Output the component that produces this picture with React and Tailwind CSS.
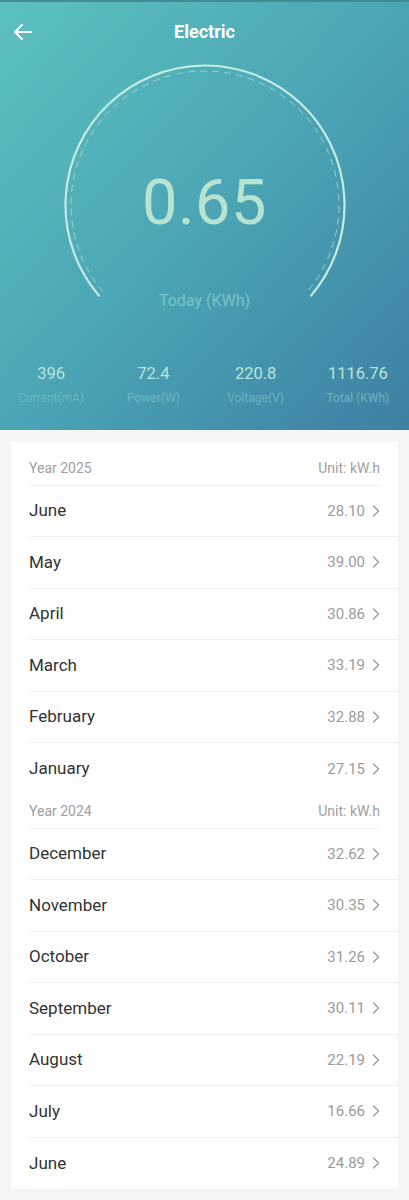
import React from "react";

const years = [
  {
    year: "2025",
    months: [
      ["June", "28.10"],
      ["May", "39.00"],
      ["April", "30.86"],
      ["March", "33.19"],
      ["February", "32.88"],
      ["January", "27.15"],
    ],
  },
  {
    year: "2024",
    months: [
      ["December", "32.62"],
      ["November", "30.35"],
      ["October", "31.26"],
      ["September", "30.11"],
      ["August", "22.19"],
      ["July", "16.66"],
      ["June", "24.89"],
    ],
  },
];

const stats = [
  ["396", "Current(mA)"],
  ["72.4", "Power(W)"],
  ["220.8", "Voltage(V)"],
  ["1116.76", "Total (KWh)"],
];

// arc from 139.5deg clockwise over the top to 40.5deg
function arcPath(r) {
  const cx = 145;
  const cy = 145;
  const a1 = (139.5 * Math.PI) / 180;
  const a2 = (40.5 * Math.PI) / 180;
  const x1 = cx + r * Math.cos(a1);
  const y1 = cy + r * Math.sin(a1);
  const x2 = cx + r * Math.cos(a2);
  const y2 = cy + r * Math.sin(a2);
  return `M ${x1} ${y1} A ${r} ${r} 0 1 1 ${x2} ${y2}`;
}

function Gauge() {
  return (
    <div className="relative mx-auto h-[260px] w-[290px]">
      <svg className="absolute inset-0" width="290" height="260" viewBox="0 0 290 260" fill="none">
        <path d={arcPath(139.5)} stroke="#c4ebdf" strokeWidth="2.2" strokeLinecap="round" />
        <path d={arcPath(134)} stroke="#a9ddd3" strokeWidth="1" strokeDasharray="7 5" opacity="0.8" />
      </svg>
      <div className="relative flex flex-col items-center pt-[111px]">
        <div className="text-[63px] leading-none font-normal tracking-[0.5px] text-[#b6e4d0]">0.65</div>
        <div className="mt-[59px] text-[16px] leading-none text-[#79c4c5]">Today (KWh)</div>
      </div>
    </div>
  );
}

function Chevron() {
  return (
    <svg width="8" height="12" viewBox="0 0 8 12" fill="none" className="ml-[7px]">
      <path d="M1.5 1 L6.5 6 L1.5 11" stroke="#9b9b9b" strokeWidth="1.4" strokeLinecap="round" strokeLinejoin="round" />
    </svg>
  );
}

export default function App() {
  return (
    <div className="min-h-[1200px] w-[409px] bg-[#f4f5f5] font-['Roboto','Liberation_Sans',sans-serif]">
      <div className="bg-gradient-to-br from-[#5cc1bf] via-[#4ba5b5] to-[#3d80a3]">
        <div className="h-[2px] bg-[#3f8d92]" />
        <div className="relative flex h-[58px] items-center justify-center">
          <svg className="absolute left-[13px] top-[20px]" width="20" height="20" viewBox="0 0 20 20" fill="none">
            <path d="M2 10 H18 M9 3 L2 10 L9 17" stroke="#ffffff" strokeWidth="2" strokeLinecap="round" strokeLinejoin="round" />
          </svg>
          <span className="text-[18px] font-bold text-white">Electric</span>
        </div>
        <Gauge />
        <div className="mt-[46px] grid grid-cols-4 pb-[26px]">
          {stats.map(([v, l]) => (
            <div key={l} className="flex flex-col items-center">
              <span className="text-[16.5px] leading-none text-[#b9e4da]">{v}</span>
              <span className="mt-[9px] text-[12px] leading-none text-[#6cb4c0]">{l}</span>
            </div>
          ))}
        </div>
      </div>

      <div className="px-[11px] pt-[12px] pb-[11px]">
        <div className="bg-white pt-[10px]">
          {years.map((y) => (
            <div key={y.year}>
              <div className="mx-[18px] flex h-[34px] items-center justify-between border-b border-[#f0f0f0] text-[14px] text-[#a0a0a0]">
                <span>Year {y.year}</span>
                <span>Unit: kW.h</span>
              </div>
              {y.months.map(([m, v], i) => (
                <div
                  key={m}
                  className={
                    i === y.months.length - 1
                      ? "ml-[18px] flex h-[51.5px] items-center justify-between pr-[18px]"
                      : "ml-[18px] flex h-[51.5px] items-center justify-between border-b border-[#f0f0f0] pr-[18px]"
                  }
                >
                  <span className="text-[17px] text-[#333333]">{m}</span>
                  <span className="flex items-center text-[15px] text-[#9b9b9b]">
                    {v}
                    <Chevron />
                  </span>
                </div>
              ))}
            </div>
          ))}
        </div>
      </div>
    </div>
  );
}
